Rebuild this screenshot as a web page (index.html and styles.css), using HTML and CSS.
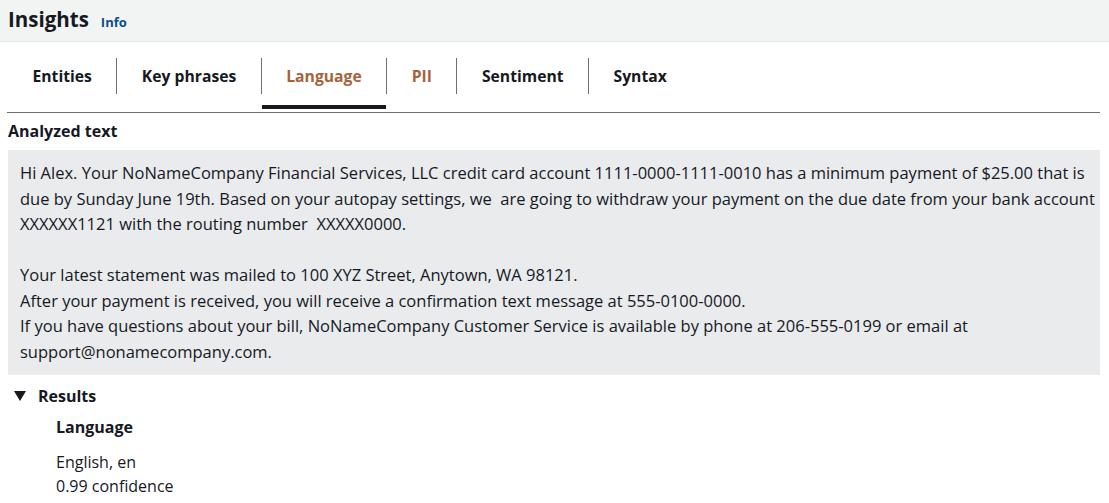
FILE: index.html
```html
<!DOCTYPE html>
<html>
<head>
<meta charset="utf-8">
<link rel="stylesheet" href="styles.css">
</head>
<body>
<header class="page-header">
  <h1 class="title">Insights</h1>
  <a class="info-link" href="#">Info</a>
</header>
<main class="content">
  <nav class="tabs">
    <div class="tab">Entities</div>
    <div class="tab">Key phrases</div>
    <div class="tab tab-active">Language</div>
    <div class="tab tab-hover">PII</div>
    <div class="tab">Sentiment</div>
    <div class="tab">Syntax</div>
  </nav>
  <h2 class="label">Analyzed text</h2>
  <div class="analyzed">
    <p>Hi Alex. Your NoNameCompany Financial Services, LLC credit card account 1111-0000-1111-0010 has a minimum payment of $25.00 that is<br>due by Sunday June 19th. Based on your autopay settings, we&nbsp; are going to withdraw your payment on the due date from your bank account<br>XXXXXX1121 with the routing number&nbsp; XXXXX0000.</p>
    <p>Your latest statement was mailed to 100 XYZ Street, Anytown, WA 98121.<br>After your payment is received, you will receive a confirmation text message at 555-0100-0000.<br>If you have questions about your bill, NoNameCompany Customer Service is available by phone at 206-555-0199 or email at<br>support@nonamecompany.com.</p>
  </div>
  <section class="results">
    <div class="results-head">
      <svg class="caret" width="12" height="10" viewBox="0 0 12 10" aria-hidden="true"><polygon points="0,0 12,0 6,10" fill="#16191f"/></svg>
      <span>Results</span>
    </div>
    <div class="results-body">
      <h3 class="res-title">Language</h3>
      <div class="res-value">English, en</div>
      <div class="res-value">0.99 confidence</div>
    </div>
  </section>
</main>
</body>
</html>
```
FILE: styles.css
```css
* { box-sizing: border-box; }
html, body { margin: 0; padding: 0; background: #ffffff; }
body {
  font-family: "Open Sans", "Noto Sans", sans-serif;
  color: #16191f;
  font-size: 16px;
}
.page-header {
  height: 42px;
  background: #f2f3f3;
  border-bottom: 1px solid #e4e6e6;
  display: flex;
  align-items: center;
  gap: 12px;
  padding: 0 8px;
}
.title {
  margin: 0;
  font-size: 20.5px;
  font-weight: 700;
  line-height: 1;
  position: relative;
  top: -1px;
}
.info-link {
  color: #0b4f86;
  font-size: 13px;
  font-weight: 700;
  text-decoration: none;
  position: relative;
  top: 1px;
}
.content { padding: 0 9px 0 8px; }
.tabs {
  display: flex;
  height: 71px;
  align-items: center;
  border-bottom: 1px solid #687078;
  margin-left: -1px;
  padding-left: 1px;
}
.tab {
  height: 36px;
  display: flex;
  align-items: center;
  padding: 0 24.5px;
  font-weight: 700;
  font-size: 15.7px;
  border-right: 1px solid #687078;
  position: relative;
  top: -1px;
}
.tab:last-child { border-right: none; }
.tab-active, .tab-hover { color: #a8623b; }
.tab-active::after {
  content: "";
  position: absolute;
  left: 0;
  right: 0;
  bottom: -15px;
  height: 4px;
  background: #16191f;
}
.label {
  margin: 0;
  font-size: 16px;
  font-weight: 700;
  line-height: 20px;
  padding: 8px 0 9px 0;
}
.analyzed {
  background: #e9ebed;
  padding: 10px 6px 11px 12px;
  font-size: 16.5px;
  line-height: 25.5px;
}
.analyzed p { margin: 0; white-space: nowrap; }
.analyzed p + p { margin-top: 25.5px; }
.results { padding-top: 9px; }
.results-head {
  display: flex;
  align-items: center;
  gap: 12px;
  font-weight: 700;
  font-size: 16px;
  line-height: 24px;
  padding-left: 6px;
}
.caret { flex: none; }
.results-body { padding-left: 48px; padding-top: 7px; }
.res-title {
  margin: 0 0 11px;
  font-size: 16px;
  font-weight: 700;
  line-height: 24px;
}
.res-value { font-size: 16px; line-height: 24px; }
```
